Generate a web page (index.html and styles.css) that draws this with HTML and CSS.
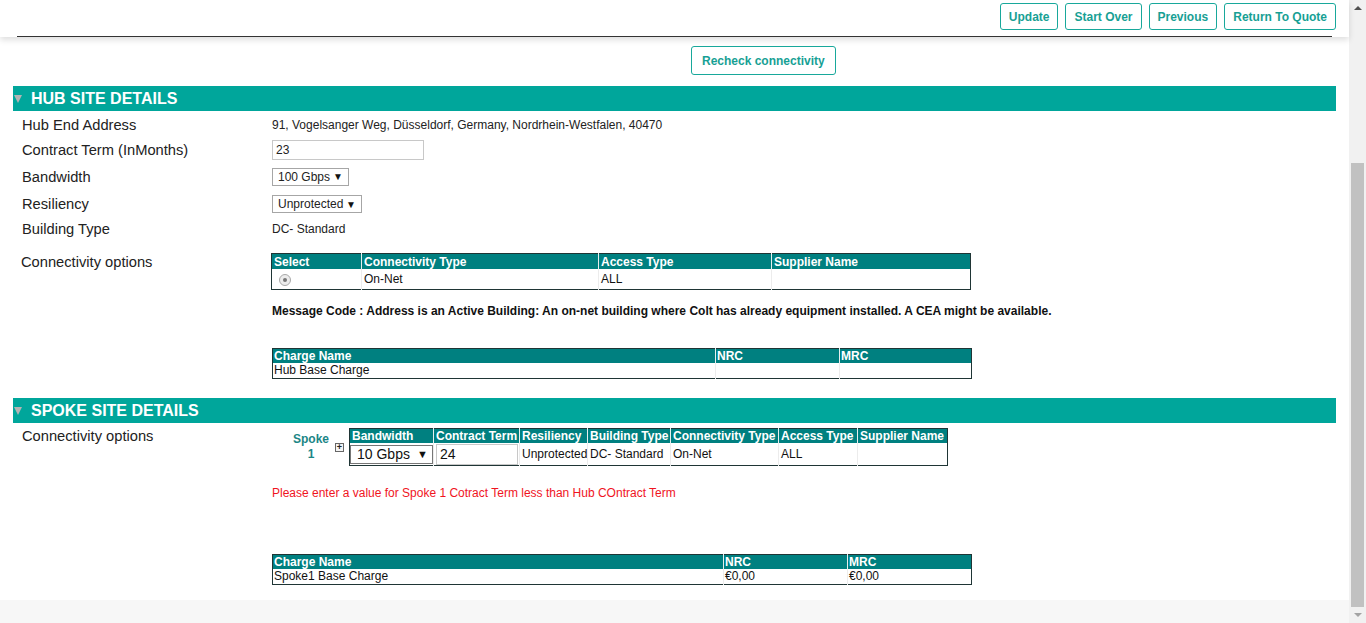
FILE: index.html
```html
<!DOCTYPE html>
<html>
<head>
<meta charset="utf-8">
<link rel="stylesheet" href="styles.css">
</head>
<body>
<div class="viewport">
  <div class="page">
    <header class="topbar">
      <div class="actions">
        <button class="btn">Update</button>
        <button class="btn">Start Over</button>
        <button class="btn">Previous</button>
        <button class="btn">Return To Quote</button>
      </div>
      <div class="topline"></div>
    </header>

    <main class="content">
      <div class="recheck-wrap"><button class="btn btn-lg">Recheck connectivity</button></div>

      <section class="section">
        <div class="section-head"><span class="tri"></span><span class="title">HUB SITE DETAILS</span></div>
        <div class="row r1"><div class="label">Hub End Address</div><div class="value">91, Vogelsanger Weg, Düsseldorf, Germany, Nordrhein-Westfalen, 40470</div></div>
        <div class="row r2"><div class="label">Contract Term (InMonths)</div><div class="value"><span class="textbox">23</span></div></div>
        <div class="row r3"><div class="label">Bandwidth</div><div class="value"><span class="selbox sel-bw"><span>100 Gbps</span><span class="arr">▼</span></span></div></div>
        <div class="row r4"><div class="label">Resiliency</div><div class="value"><span class="selbox sel-res"><span>Unprotected</span><span class="arr">▼</span></span></div></div>
        <div class="row r5"><div class="label">Building Type</div><div class="value">DC- Standard</div></div>
        <div class="row r6">
          <div class="label lbl-top">Connectivity options</div>
          <div class="value">
            <table class="grid conn">
              <colgroup><col style="width:90px"><col style="width:237px"><col style="width:173px"><col></colgroup>
              <tr><th>Select</th><th>Connectivity Type</th><th>Access Type</th><th>Supplier Name</th></tr>
              <tr class="drow"><td><span class="radio"><span class="dot"></span></span></td><td>On-Net</td><td>ALL</td><td></td></tr>
            </table>
            <p class="msg">Message Code : Address is an Active Building: An on-net building where Colt has already equipment installed. A CEA might be available.</p>
            <table class="grid charge">
              <colgroup><col style="width:443px"><col style="width:124px"><col></colgroup>
              <tr><th>Charge Name</th><th>NRC</th><th>MRC</th></tr>
              <tr><td>Hub Base Charge</td><td></td><td></td></tr>
            </table>
          </div>
        </div>
      </section>

      <section class="section spoke">
        <div class="section-head"><span class="tri"></span><span class="title">SPOKE SITE DETAILS</span></div>
        <div class="row r-spoke">
          <div class="label lbl-top">Connectivity options</div>
          <div class="value">
            <div class="spoke-line">
              <div class="spoke-name">Spoke<br>1</div>
              <span class="plus">+</span>
              <table class="grid spoke-tbl">
                <colgroup><col style="width:84px"><col style="width:86px"><col style="width:68px"><col style="width:83px"><col style="width:108px"><col style="width:79px"><col></colgroup>
                <tr><th>Bandwidth</th><th>Contract Term</th><th>Resiliency</th><th>Building Type</th><th>Connectivity Type</th><th>Access Type</th><th>Supplier Name</th></tr>
                <tr class="srow"><td class="c-sel"><span class="selbox sel-sp"><span>10 Gbps</span><span class="arr">▼</span></span></td><td class="c-in"><span class="textbox tb-sp">24</span></td><td>Unprotected</td><td>DC- Standard</td><td>On-Net</td><td>ALL</td><td></td></tr>
              </table>
            </div>
            <p class="err">Please enter a value for Spoke 1 Cotract Term less than Hub COntract Term</p>
            <table class="grid charge charge2">
              <colgroup><col style="width:451px"><col style="width:124px"><col></colgroup>
              <tr><th>Charge Name</th><th>NRC</th><th>MRC</th></tr>
              <tr><td>Spoke1 Base Charge</td><td>€0,00</td><td>€0,00</td></tr>
            </table>
          </div>
        </div>
      </section>
    </main>
    <footer class="footer"></footer>
  </div>
  <div class="scrollbar">
    <span class="sb-up"></span>
    <div class="sb-track"><div class="sb-thumb"></div></div>
    <span class="sb-down"></span>
  </div>
</div>
</body>
</html>
```

FILE: styles.css
```css
html, body { margin: 0; padding: 0; }
body {
  font-family: "Liberation Sans", Arial, sans-serif;
  font-size: 12px;
  color: #222;
  overflow: hidden;
  background: #fff;
}
.viewport { display: flex; width: 1366px; height: 623px; }
.page { width: 1349px; display: flex; flex-direction: column; }

.topbar {
  height: 37px;
  background: #fff;
  position: relative;
  z-index: 2;
  box-shadow: 0 3px 6px rgba(0,0,0,0.13);
  display: flex;
  flex-direction: column;
}
.actions {
  display: flex;
  justify-content: flex-end;
  gap: 7px;
  padding: 3px 13px 0 0;
  height: 33px;
  box-sizing: border-box;
}
.topline { height: 1px; margin: 0 17px; background: #333; margin-top: auto; }

.btn {
  font-family: "Liberation Sans", Arial, sans-serif;
  font-weight: bold;
  font-size: 12px;
  color: #17a094;
  background: #fff;
  border: 1px solid #18a89b;
  border-radius: 3px;
  height: 27px;
  padding: 0 8px;
  cursor: pointer;
}
.btn-lg { height: 29px; padding: 0 10px; }

.content { flex: 1; }
.recheck-wrap { display: flex; padding: 9px 0 0 691px; }

.section { margin: 11px 13px 0 13px; }
.section.spoke { margin-top: 19px; }
.section-head {
  height: 25px;
  background: #00a69b;
  display: flex;
  align-items: center;
  color: #fff;
}
.tri {
  width: 0; height: 0;
  border-left: 4px solid transparent;
  border-right: 4px solid transparent;
  border-top: 8px solid #b4b4b4;
  margin: 1px 9px 0 1px;
}
.title { font-weight: bold; font-size: 16px; }

.row {
  display: grid;
  grid-template-columns: 250px 1fr;
  padding-left: 9px;
  align-items: center;
}
.label { font-size: 14.7px; color: #222; }
.value { font-size: 12px; color: #222; }
.r1 { height: 27px; }
.r2 { height: 24px; }
.r3 { height: 29px; }
.r4 { height: 26px; }
.r5 { height: 24px; }
.r6 { align-items: start; margin-top: 12px; }
.lbl-top { padding-top: 1px; line-height: 17px; margin-left: -1px; }
.r-spoke { align-items: start; margin-top: 5px; }
.r-spoke .lbl-top { margin-left: 0; padding-top: 0; }

.textbox {
  display: inline-flex;
  align-items: center;
  width: 152px;
  height: 20px;
  box-sizing: border-box;
  border: 1px solid #c8c8c8;
  padding-left: 3px;
  font-size: 12px;
  color: #222;
}
.selbox {
  display: inline-flex;
  align-items: center;
  justify-content: space-between;
  height: 18px;
  box-sizing: border-box;
  border: 1px solid #a6a6a6;
  padding: 0 5px 0 5px;
  font-size: 12px;
  color: #222;
}
.sel-bw { width: 77px; }
.sel-res { width: 90px; }
.arr { font-size: 10px; color: #111; }

.grid {
  border-collapse: collapse;
  border: 1px solid #1f3535;
  table-layout: fixed;
}
.grid th {
  background: #008080;
  color: #fff;
  font-weight: bold;
  font-size: 12px;
  text-align: left;
  padding: 0 2px;
  height: 15px;
  line-height: 14px;
  border-left: 1px solid #e8eeee;
  white-space: nowrap;
  overflow: hidden;
}
.grid th:first-child, .grid td:first-child { border-left: none; }
.grid td {
  font-size: 12px;
  color: #111;
  padding: 0 2px;
  border-left: 1px solid #ececec;
  white-space: nowrap;
  overflow: hidden;
}
.conn { width: 700px; margin-left: -1px; }
.conn .drow td { height: 20px; }
.radio {
  display: inline-block;
  width: 12px; height: 12px;
  box-sizing: border-box;
  border: 1px solid #a8a8a8;
  border-radius: 50%;
  background: #ececec;
  margin-left: 5px;
  vertical-align: middle;
}
.dot {
  display: block;
  width: 4px; height: 4px;
  border-radius: 50%;
  background: #777;
  margin: 3px;
}

.msg { margin: 14px 0 0 0; font-weight: bold; font-size: 12px; color: #111; line-height: 14px; }

.charge { width: 700px; margin-top: 30px; }
.charge th, .charge td { padding: 0 1px; }
.charge th { height: 14px; line-height: 14px; }
.charge td { height: 15px; line-height: 15px; }
.charge2 { margin-top: 54px; }

.spoke-line { display: flex; align-items: flex-start; }
.spoke-name {
  margin: 4px 0 0 21px;
  width: 36px;
  text-align: center;
  font-weight: bold;
  font-size: 12px;
  line-height: 15px;
  color: #1b8686;
}
.plus {
  display: inline-flex;
  align-items: center;
  justify-content: center;
  width: 9px; height: 9px;
  box-sizing: border-box;
  border: 1px solid #666;
  font-size: 9px;
  line-height: 1;
  font-weight: bold;
  color: #222;
  margin: 15px 5px 0 6px;
  background: #f4f4f4;
}
.spoke-tbl { width: 599px; }
.spoke-tbl th { height: 14px; line-height: 14px; }
.spoke-tbl .srow td { height: 22px; font-size: 12px; }
.spoke-tbl td.c-sel, .spoke-tbl td.c-in { padding: 0; }
.sel-sp {
  width: 83px;
  height: 19px;
  border-color: #767676;
  font-size: 14px;
  padding: 0 4px 0 6px;
  color: #111;
  vertical-align: middle;
}
.sel-sp .arr { font-size: 11px; }
.tb-sp { width: 82px; height: 21px; font-size: 14px; margin-left: 2px; color: #111; vertical-align: middle; }

.err { margin: 20px 0 0 0; color: #f0141e; font-size: 12px; line-height: 14px; }

.footer { height: 23px; background: #f7f7f7; }

.scrollbar {
  width: 17px;
  background: #f1f1f1;
  display: flex;
  flex-direction: column;
  align-items: center;
}
.sb-up, .sb-down { display: block; width: 0; height: 0; border-left: 4px solid transparent; border-right: 4px solid transparent; }
.sb-up { border-bottom: 4px solid #505050; margin-top: 6px; }
.sb-down { border-top: 4px solid #a3a3a3; margin: 6px 0 6px 0; }
.sb-track { flex: 1; width: 100%; display: flex; flex-direction: column; }
.sb-thumb { margin: 153px 2px 0 2px; height: 444px; background: #c1c1c1; }
```
